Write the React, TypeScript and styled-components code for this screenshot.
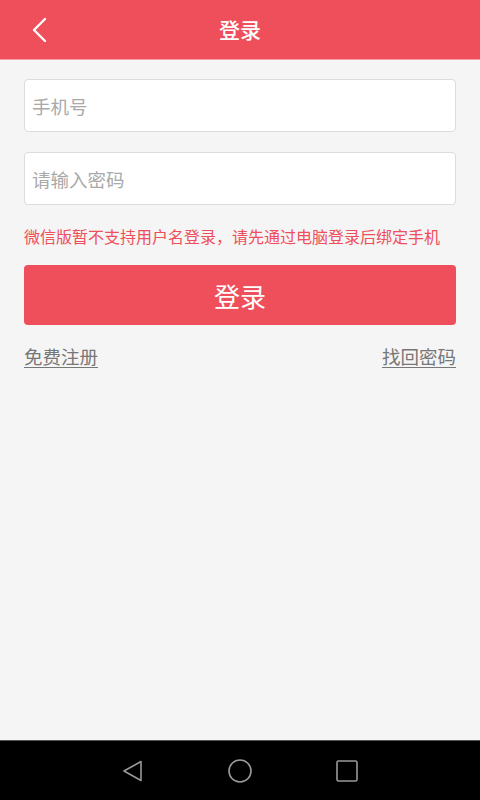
import React from 'react';
import styled, { createGlobalStyle } from 'styled-components';

const GlobalStyle = createGlobalStyle`
  html, body {
    margin: 0;
    padding: 0;
    background: #f5f5f5;
  }
  body {
    font-family: "Noto Sans CJK SC", "Noto Sans", sans-serif;
  }
`;

const Screen = styled.div`
  width: 480px;
  height: 800px;
  display: flex;
  flex-direction: column;
  background: #f5f5f5;
  overflow: hidden;
`;

const Header = styled.header`
  height: 60px;
  flex-shrink: 0;
  background: #ee4f5b;
  border-bottom: 1px solid #f7a0a6;
  box-sizing: border-box;
  display: grid;
  grid-template-columns: 80px 1fr 80px;
  align-items: center;
`;

const BackButton = styled.button`
  border: none;
  background: none;
  padding: 0 0 0 30px;
  height: 60px;
  display: flex;
  align-items: center;
  cursor: pointer;
`;

const Title = styled.h1`
  margin: 0;
  text-align: center;
  color: #fff;
  font-size: 21px;
  font-weight: 500;
  line-height: 1;
  padding-bottom: 2px;
`;

const Content = styled.main`
  flex: 1;
  padding: 19px 24px 0;
  display: flex;
  flex-direction: column;
`;

const Field = styled.input<{ $gap: number }>`
  height: 53px;
  box-sizing: border-box;
  border: 1px solid #dcdcdc;
  border-radius: 4px;
  background: #fff;
  padding: 0 7px;
  font-family: inherit;
  font-size: 18.5px;
  color: #333;
  margin-bottom: ${(p) => p.$gap}px;
  outline: none;

  &::placeholder {
    color: #a9a9a9;
  }
`;

const Notice = styled.p`
  margin: 0 0 14px;
  color: #ee4f5b;
  font-size: 16px;
  line-height: 30px;
  white-space: nowrap;
`;

const LoginButton = styled.button`
  height: 60px;
  border: none;
  border-radius: 4px;
  background: #ee4f5b;
  color: #fff;
  font-family: inherit;
  font-size: 26px;
  cursor: pointer;
  margin-bottom: 17px;
`;

const LinkRow = styled.div`
  display: flex;
  justify-content: space-between;
`;

const TextLink = styled.a`
  color: #777;
  font-size: 18.5px;
  text-decoration: underline;
  text-underline-offset: 3px;
  line-height: 28px;
`;

const NavBar = styled.nav`
  height: 60px;
  flex-shrink: 0;
  background: #000;
  border-top: 1px solid #555;
  box-sizing: border-box;
  display: flex;
  justify-content: center;
  align-items: center;
  gap: 83px;
`;

const NavIcon = styled.svg`
  width: 24px;
  height: 24px;
  display: block;
`;

const App: React.FC = () => (
  <>
    <GlobalStyle />
    <Screen>
      <Header>
        <BackButton aria-label="返回">
          <svg width="18" height="26" viewBox="0 0 18 26">
            <path d="M15 2 L4 13 L15 24" fill="none" stroke="#fff" strokeWidth="2.4" strokeLinecap="round" strokeLinejoin="round" />
          </svg>
        </BackButton>
        <Title>登录</Title>
        <span />
      </Header>
      <Content>
        <Field $gap={20} placeholder="手机号" />
        <Field $gap={16} type="password" placeholder="请输入密码" />
        <Notice>微信版暂不支持用户名登录，请先通过电脑登录后绑定手机</Notice>
        <LoginButton>登录</LoginButton>
        <LinkRow>
          <TextLink>免费注册</TextLink>
          <TextLink>找回密码</TextLink>
        </LinkRow>
      </Content>
      <NavBar>
        <NavIcon viewBox="0 0 24 24">
          <path d="M20 2.5 L3 12 L20 21.5 Z" fill="none" stroke="#999" strokeWidth="1.6" strokeLinejoin="round" />
        </NavIcon>
        <NavIcon viewBox="0 0 24 24">
          <circle cx="12" cy="12" r="11" fill="none" stroke="#999" strokeWidth="1.6" />
        </NavIcon>
        <NavIcon viewBox="0 0 24 24">
          <rect x="2" y="2" width="20" height="20" rx="1.5" fill="none" stroke="#999" strokeWidth="1.6" />
        </NavIcon>
      </NavBar>
    </Screen>
  </>
);

export default App;
